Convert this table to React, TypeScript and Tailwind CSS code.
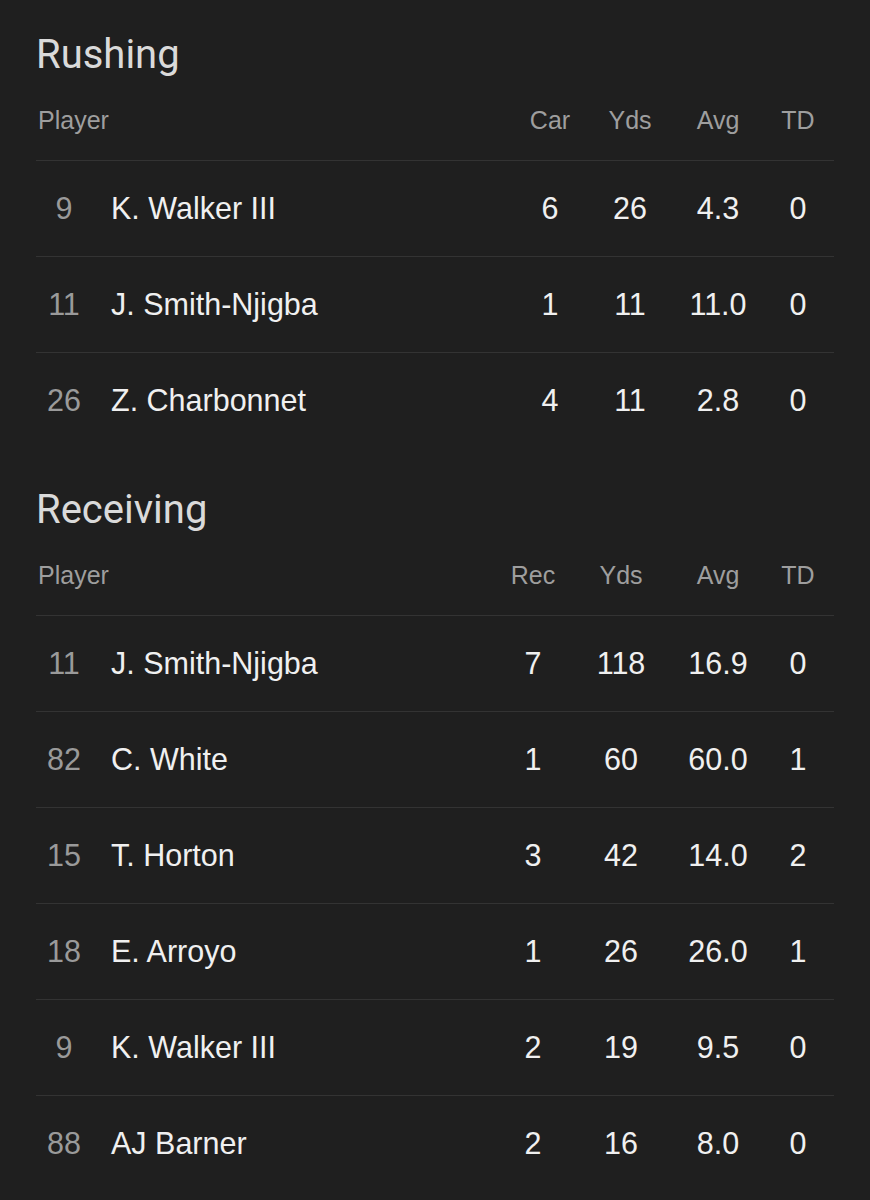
import React from "react";

type Row = { num: string; name: string; stats: string[] };

type Section = {
  title: string;
  cols: { label: string; w: string }[];
  rows: Row[];
};

const sections: Section[] = [
  {
    title: "Rushing",
    cols: [
      { label: "Car", w: "w-[72px]" },
      { label: "Yds", w: "w-[88px]" },
      { label: "Avg", w: "w-[88px]" },
      { label: "TD", w: "w-[72px]" },
    ],
    rows: [
      { num: "9", name: "K. Walker III", stats: ["6", "26", "4.3", "0"] },
      { num: "11", name: "J. Smith-Njigba", stats: ["1", "11", "11.0", "0"] },
      { num: "26", name: "Z. Charbonnet", stats: ["4", "11", "2.8", "0"] },
    ],
  },
  {
    title: "Receiving",
    cols: [
      { label: "Rec", w: "w-[70px]" },
      { label: "Yds", w: "w-[106px]" },
      { label: "Avg", w: "w-[88px]" },
      { label: "TD", w: "w-[72px]" },
    ],
    rows: [
      { num: "11", name: "J. Smith-Njigba", stats: ["7", "118", "16.9", "0"] },
      { num: "82", name: "C. White", stats: ["1", "60", "60.0", "1"] },
      { num: "15", name: "T. Horton", stats: ["3", "42", "14.0", "2"] },
      { num: "18", name: "E. Arroyo", stats: ["1", "26", "26.0", "1"] },
      { num: "9", name: "K. Walker III", stats: ["2", "19", "9.5", "0"] },
      { num: "88", name: "AJ Barner", stats: ["2", "16", "8.0", "0"] },
    ],
  },
];

const body = { fontFamily: '"Liberation Sans", Arial, Helvetica, sans-serif' };
const head = { fontFamily: 'Roboto, "Open Sans", sans-serif' };

function StatTable({ s }: { s: Section }) {
  return (
    <div className="flex flex-col">
      <div className="h-[81px] flex items-end pb-[3px]">
        <h2
          className="text-[40px] leading-[46px] text-[#dadada] font-normal"
          style={head}
        >
          {s.title}
        </h2>
      </div>
      <div className="h-[80px] flex items-center text-[25px] text-[#9e9e9e] border-b border-[#333333]" style={body}>
        <div className="flex-1 pl-[2px]">Player</div>
        {s.cols.map((c) => (
          <div key={c.label} className={`${c.w} text-center`}>
            {c.label}
          </div>
        ))}
      </div>
      {s.rows.map((r, i) => (
        <div
          key={i}
          className={`h-[96px] flex items-center text-[30.5px] text-[#f0f0f0] ${
            i < s.rows.length - 1 ? "border-b border-[#333333]" : ""
          }`}
          style={body}
        >
          <div className="w-[56px] text-center text-[#9a9a9a]">{r.num}</div>
          <div className="flex-1 ml-[19px]">{r.name}</div>
          {r.stats.map((v, j) => (
            <div key={j} className={`${s.cols[j].w} text-center`}>
              {v}
            </div>
          ))}
        </div>
      ))}
    </div>
  );
}

export default function App() {
  return (
    <div className="w-[870px] h-[1200px] bg-[#1f1f1f] overflow-hidden">
      <div className="ml-[36px] mr-[36px] flex flex-col">
        <StatTable s={sections[0]} />
        <div className="mt-[6px]">
          <StatTable s={sections[1]} />
        </div>
      </div>
    </div>
  );
}
